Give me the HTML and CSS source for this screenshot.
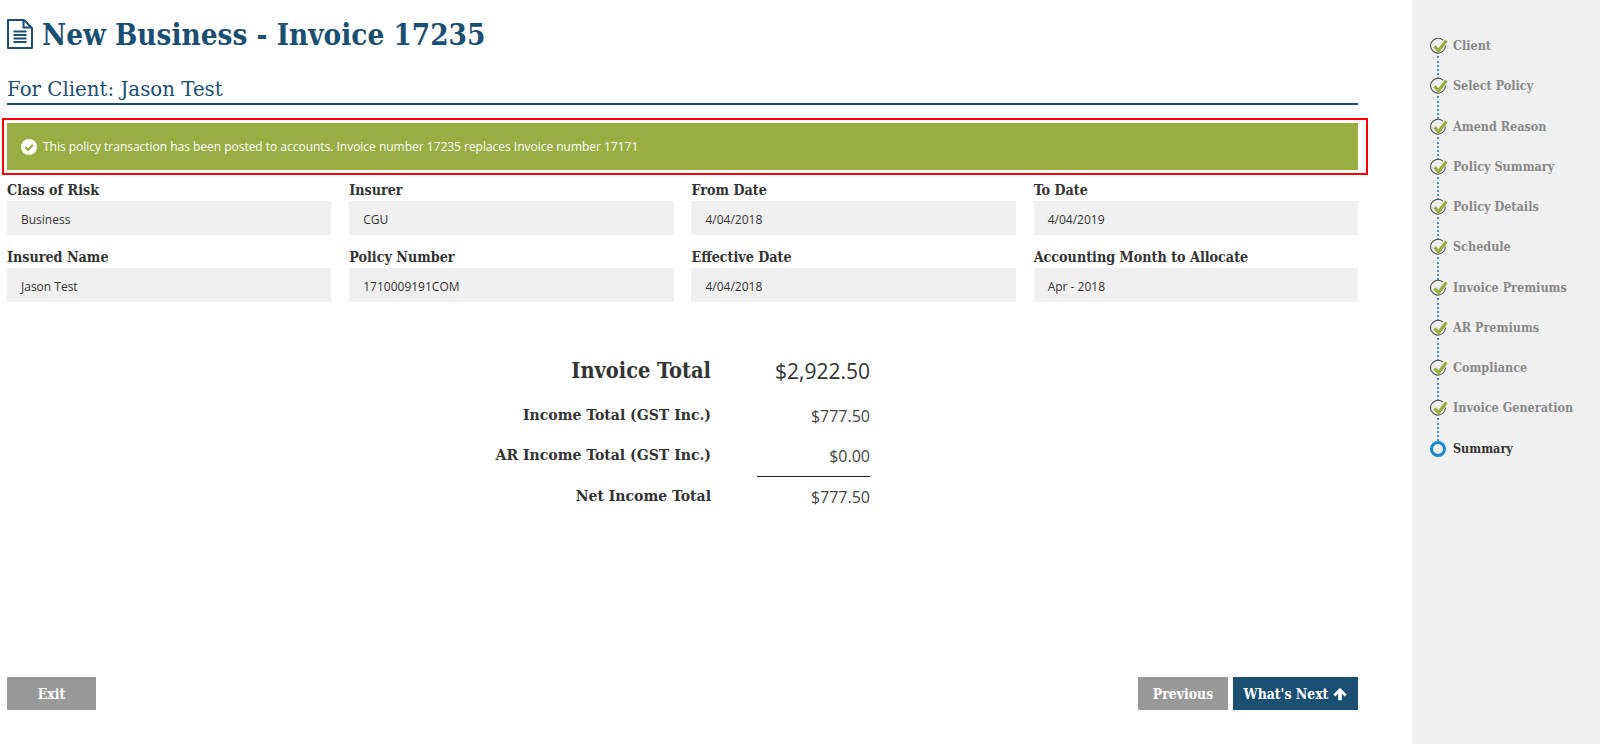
FILE: index.html
```html
<!DOCTYPE html>
<html lang="en">
<head>
<meta charset="utf-8">
<title>New Business - Invoice 17235</title>
<link rel="stylesheet" href="styles.css">
</head>
<body>
<svg class="defs" width="0" height="0" aria-hidden="true">
  <symbol id="done" viewBox="0 0 20 18">
    <path d="M13 2.2A7.4 7.4 0 1 0 15.4 7.5" fill="none" stroke="#555" stroke-width="1.1"/>
    <path d="M4.4 8.4L8.6 12.6L16.4 2.6" fill="none" stroke="#98ad42" stroke-width="3.2"/>
  </symbol>
</svg>
<div class="page">
  <main class="main">
    <h1 class="title">
      <svg class="doc-icon" viewBox="0 0 26 30" width="26" height="30" aria-hidden="true">
        <path d="M1 1H17L25 9V29H1Z" fill="none" stroke="#1b4f72" stroke-width="2" stroke-linejoin="round"/>
        <path d="M16.5 1.5V8.5H24.5" fill="none" stroke="#1b4f72" stroke-width="2"/>
        <path d="M6.5 12.5H19.5M6.5 16H19.5M6.5 19.5H19.5M6.5 23H19.5" stroke="#1b4f72" stroke-width="1.8"/>
      </svg>
      <span>New Business - Invoice 17235</span>
    </h1>
    <h2 class="client">For Client: Jason Test</h2>
    <div class="alert-mark">
      <div class="alert">
        <svg class="alert-icon" viewBox="0 0 16 16" width="16" height="16" aria-hidden="true">
          <circle cx="8" cy="8" r="8" fill="#fff"/>
          <path d="M4.3 8.2L7 10.9L11.8 5.8" fill="none" stroke="#98ad42" stroke-width="2.2"/>
        </svg>
        <span>This policy transaction has been posted to accounts. Invoice number 17235 replaces Invoice number 17171</span>
      </div>
    </div>
    <div class="fields">
      <div class="field"><label>Class of Risk</label><div class="value">Business</div></div>
      <div class="field"><label>Insurer</label><div class="value">CGU</div></div>
      <div class="field"><label>From Date</label><div class="value">4/04/2018</div></div>
      <div class="field"><label>To Date</label><div class="value">4/04/2019</div></div>
      <div class="field"><label>Insured Name</label><div class="value">Jason Test</div></div>
      <div class="field"><label>Policy Number</label><div class="value">1710009191COM</div></div>
      <div class="field"><label>Effective Date</label><div class="value">4/04/2018</div></div>
      <div class="field"><label>Accounting Month to Allocate</label><div class="value">Apr - 2018</div></div>
    </div>
    <div class="totals">
      <div class="t-label big">Invoice Total</div><div class="t-val big">$2,922.50</div>
      <div class="t-label">Income Total (GST Inc.)</div><div class="t-val">$777.50</div>
      <div class="t-label">AR Income Total (GST Inc.)</div><div class="t-val ruled">$0.00</div>
      <div class="t-label">Net Income Total</div><div class="t-val">$777.50</div>
    </div>
    <div class="actions">
      <button class="btn grey exit">Exit</button>
      <div class="right">
        <button class="btn grey prev">Previous</button>
        <button class="btn navy next">What's Next
          <svg viewBox="0 0 14 14" width="14" height="14" aria-hidden="true"><path d="M7 .8L13.6 7.4L11.6 9.4L8.8 6.6V13.2H5.2V6.6L2.4 9.4L.4 7.4Z" fill="#fff"/></svg>
        </button>
      </div>
    </div>
  </main>
  <aside class="side">
    <ol class="steps">
      <li class="step done"><svg class="tick" width="20" height="18" aria-hidden="true"><use href="#done"/></svg>Client</li>
      <li class="step done"><svg class="tick" width="20" height="18" aria-hidden="true"><use href="#done"/></svg>Select Policy</li>
      <li class="step done"><svg class="tick" width="20" height="18" aria-hidden="true"><use href="#done"/></svg>Amend Reason</li>
      <li class="step done"><svg class="tick" width="20" height="18" aria-hidden="true"><use href="#done"/></svg>Policy Summary</li>
      <li class="step done"><svg class="tick" width="20" height="18" aria-hidden="true"><use href="#done"/></svg>Policy Details</li>
      <li class="step done"><svg class="tick" width="20" height="18" aria-hidden="true"><use href="#done"/></svg>Schedule</li>
      <li class="step done"><svg class="tick" width="20" height="18" aria-hidden="true"><use href="#done"/></svg>Invoice Premiums</li>
      <li class="step done"><svg class="tick" width="20" height="18" aria-hidden="true"><use href="#done"/></svg>AR Premiums</li>
      <li class="step done"><svg class="tick" width="20" height="18" aria-hidden="true"><use href="#done"/></svg>Compliance</li>
      <li class="step done"><svg class="tick" width="20" height="18" aria-hidden="true"><use href="#done"/></svg>Invoice Generation</li>
      <li class="step current">Summary</li>
    </ol>
  </aside>
</div>
</body>
</html>
```
FILE: styles.css
```css
*, *::before, *::after { box-sizing: border-box; }
html, body { margin: 0; height: 100%; }
body { background: #fff; font-family: "Open Sans", sans-serif; overflow: hidden; }
.defs { position: absolute; }
.page { display: flex; height: 744px; }
.main { width: 1412px; padding: 0 54px 0 7px; display: flex; flex-direction: column; }
.side { width: 188px; background: #f0f0f0; padding-top: 26px; }

.title { margin: 0; height: 68px; padding-top: 18px; display: flex; align-items: flex-start; gap: 9px;
  font: 700 29.4px/34px "DejaVu Serif Condensed", "DejaVu Serif", serif; color: #1b4f72; }
.doc-icon { margin-top: 1px; flex: none; }
.client { margin: 0; height: 37px; padding-top: 10px; border-bottom: 2px solid #1b4f72;
  font: 400 19.8px/24px "DejaVu Serif", serif; color: #1b4f72; }

.alert-mark { margin: 13px -10px 0 -5px; padding: 3px 8px 3px 3px; border: 2px solid #f00; height: 57px; }
.alert { height: 47px; background: #98ad42; color: #fff; display: flex; align-items: center; gap: 6px; padding-left: 14px;
  font-size: 12px; letter-spacing: -0.02px; }
.alert-icon { flex: none; }

.fields { display: grid; grid-template-columns: repeat(4, 1fr); column-gap: 17.9px; margin-top: 5px; }
.field label { display: block; height: 21px; font: 700 14.2px/21px "DejaVu Serif Condensed", "DejaVu Serif", serif; color: #333; }
.value { height: 34px; margin-bottom: 12px; background: #f0f0f0; padding-left: 14px; font-size: 12px; line-height: 38px; color: #333; }

.totals { display: grid; grid-template-columns: 240px 159px; justify-content: start; margin: 35px 0 0 464px; align-items: start; }
.t-label { text-align: right; height: 40.3px; font: 700 15.6px/38px "DejaVu Serif Condensed", "DejaVu Serif", serif; color: #333; }
.t-val { justify-self: end; text-align: right; height: 40.3px; font-size: 16px; line-height: 40px; color: #444; }
.t-label.big { height: 47px; font-size: 21.6px; line-height: 44px; }
.t-val.big { height: 47px; font-size: 21px; line-height: 45px; color: #333; }
.t-val.ruled { width: 113px; border-bottom: 1px solid #222; }

.actions { margin-top: auto; margin-bottom: 34px; display: flex; justify-content: space-between; }
.right { display: flex; gap: 5px; }
.btn { height: 33px; border: 0; padding: 1px 0 0; color: #fff; font: 700 13.9px/32px "DejaVu Serif Condensed", "DejaVu Serif", serif; }
.grey { background: #999; }
.navy { background: #1b4f72; display: flex; align-items: center; justify-content: center; gap: 5px; }
.exit { width: 89px; }
.prev { width: 90px; }
.next { width: 125px; }

.steps { list-style: none; margin: 0; padding: 0 0 0 17px; }
.step { position: relative; height: 40.25px; padding-left: 24px; font: 700 12.5px/40px "DejaVu Serif Condensed", "DejaVu Serif", serif; color: #888; }
.step::before { content: ""; position: absolute; left: 8px; top: 30px; height: 23px; border-left: 2px dotted #3a94d6; }
.step:last-child::before { display: none; }
.tick { position: absolute; left: 1px; top: 12px; }
.current { color: #333; }
.current::after { content: ""; position: absolute; left: 1px; top: 12.5px; width: 16px; height: 16px; border-radius: 50%; border: 3px solid #1a88cf; }
```
